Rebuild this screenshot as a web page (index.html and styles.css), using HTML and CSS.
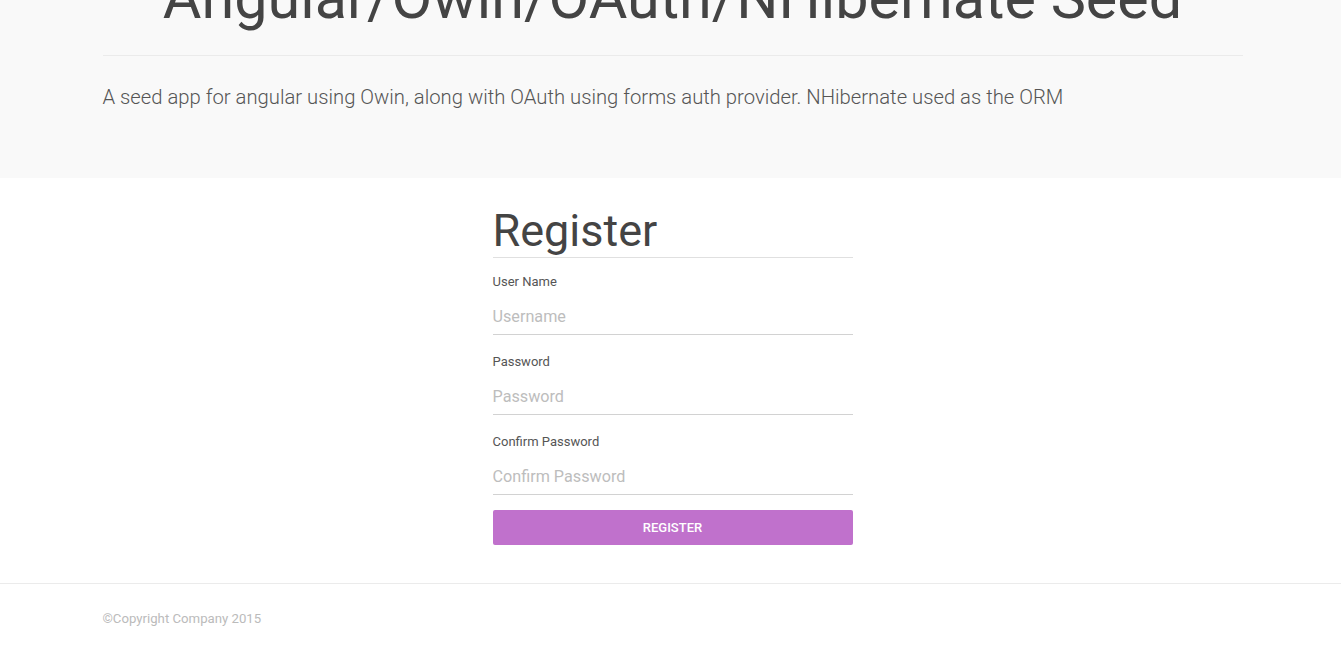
FILE: index.html
```html
<!DOCTYPE html>
<html>
<head>
<meta charset="utf-8">
<link rel="stylesheet" href="styles.css">
</head>
<body>
<header class="jumbotron">
  <div class="container">
    <h1 class="title">Angular/Owin/OAuth/NHibernate Seed</h1>
    <p class="lead">A seed app for angular using Owin, along with OAuth using forms auth provider. NHibernate used as the ORM</p>
  </div>
</header>
<main class="main">
  <form class="register">
    <h2 class="register-title">Register</h2>
    <div class="field first">
      <label class="label">User Name</label>
      <input class="input" type="text" placeholder="Username">
    </div>
    <div class="field">
      <label class="label">Password</label>
      <input class="input" type="password" placeholder="Password">
    </div>
    <div class="field">
      <label class="label">Confirm Password</label>
      <input class="input" type="password" placeholder="Confirm Password">
    </div>
    <button class="btn" type="button">Register</button>
  </form>
</main>
<footer class="footer">
  <div class="container">
    <p class="copy">©Copyright Company 2015</p>
  </div>
</footer>
</body>
</html>
```
FILE: styles.css
```css
* { box-sizing: border-box; }
html, body { margin: 0; padding: 0; }
body {
  font-family: Roboto, "Noto Sans", sans-serif;
  color: #444;
  background: #fff;
  overflow: hidden;
}
.container {
  width: 1140px;
  margin-left: calc(50% - 568px);
}
.jumbotron {
  background: #f9f9f9;
  height: 178px;
  display: flow-root;
}
.jumbotron .container {
  margin-top: -38px;
}
.title {
  margin: 0;
  font-size: 59.3px;
  font-weight: 400;
  line-height: 72px;
  text-align: center;
  color: #444;
  border-bottom: 1px solid #ebebeb;
  padding-bottom: 21px;
}
.lead {
  margin: 27px 0 0;
  font-size: 20.25px;
  font-weight: 300;
  line-height: 28px;
  color: #555;
}
.main {
  display: flex;
  justify-content: center;
  padding: 24px 0 38px 4px;
}
.register {
  width: 360px;
}
.register-title {
  margin: 0;
  font-size: 45px;
  font-weight: 400;
  line-height: 52px;
  padding-top: 3px;
  color: #444;
  border-bottom: 1px solid #e0e0e0;
}
.field {
  display: flex;
  flex-direction: column;
  padding-top: 18px;
}
.field.first {
  padding-top: 15px;
}
.label {
  font-size: 13px;
  line-height: 18px;
  color: #555;
}
.input {
  border: 0;
  border-bottom: 1px solid #d2d2d2;
  background: transparent;
  font-family: Roboto, sans-serif;
  font-size: 16.2px;
  height: 44px;
  padding: 7px 0 0;
  margin: 0;
  color: #555;
  outline: none;
}
.input::placeholder { color: #bdbdbd; }
.btn {
  display: block;
  width: 100%;
  margin-top: 15px;
  height: 35px;
  border: 0;
  border-radius: 2px;
  background: #c071cc;
  color: #fff;
  font-family: Roboto, sans-serif;
  font-size: 13px;
  font-weight: 500;
  text-transform: uppercase;
  cursor: pointer;
}
.footer {
  border-top: 1px solid #ebebeb;
  height: 80px;
}
.copy {
  margin: 26px 0 0;
  font-size: 13.2px;
  line-height: 18px;
  color: #bbb;
}
```
